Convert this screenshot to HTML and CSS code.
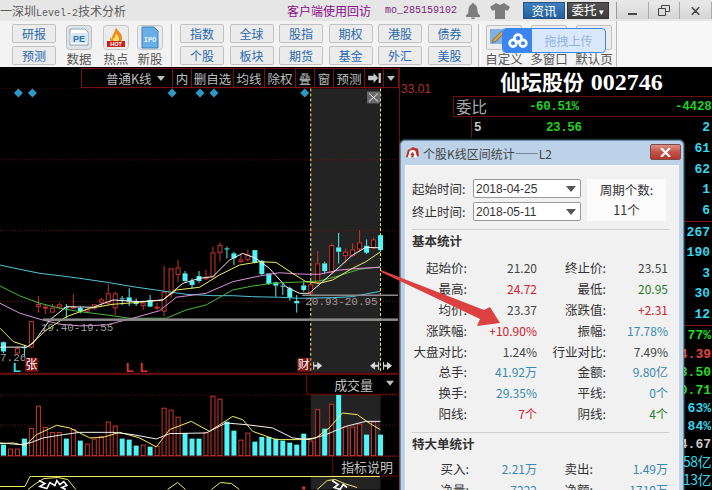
FILE: index.html
```html
<!DOCTYPE html>
<html lang="zh">
<head>
<meta charset="utf-8">
<title>深圳Level-2技术分析</title>
<link rel="stylesheet" href="styles.css">
</head>
<body>
<div class="app">
  <header class="titlebar">
    <span class="app-title"><span class="dash">一</span>深圳<span class="mono">Level-2</span>技术分析</span>
    <span class="visit">客户端使用回访</span>
    <span class="user">mo_285159102</span>
    <svg class="bell" viewBox="0 0 14 16"><path d="M7 0c1 0 1.500.8 1.500 1.500C11 2.500 11.500 5 11.500 8c0 2 1 3 2.500 4.500V14H0v-1.500C1.500 11 2.500 10 2.500 8c0-3 .5-5.500 3-6.500C5.500.8 6 0 7 0zM5 14.500h4C9 15.500 8 16 7 16s-2-.5-2-1.500z"/></svg>
    <svg class="shirt" viewBox="0 0 20 16"><path d="M6 0l4 2 4-2 6 4-2.500 4-2.500-1.500V16H5V6.500L2.500 8 0 4z"/></svg>
    <button class="tb-news">资讯</button>
    <button class="tb-order">委托 <span class="caret">▾</span></button>
    <div class="winbtns">
      <span class="winbtn"><i class="win-min"></i></span>
      <span class="winbtn"><svg viewBox="0 0 12 11" class="win-rest"><path d="M3.500 3V.5h8v6H8M.5 3.500h7v7h-7z"/></svg></span>
      <span class="winbtn"><svg viewBox="0 0 12 10" class="win-x"><path d="M1 0l5 5 5-5M1 10l5-5 5 5"/></svg></span>
    </div>
  </header>

  <nav class="toolbar">
    <div class="btncol first">
      <button class="tbtn">研报</button>
      <button class="tbtn">预测</button>
    </div>
    <div class="iconset">
      <div class="iconitem wide">
        <svg class="ticon" viewBox="0 0 26 25"><rect x=".5" y=".5" width="25" height="24" rx="3" fill="#dfe3e6" stroke="#bdbdbd"/><path d="M4 4h15l3 3v13H4z" fill="#fff" stroke="#8aa4bd"/><rect x="4" y="8" width="18" height="10" fill="#d8e6f2"/><text x="13" y="16.500" class="pe-text">PE</text></svg>
        <span>数据</span>
      </div>
      <div class="iconitem">
        <svg class="ticon" viewBox="0 0 26 25"><rect x=".5" y=".5" width="25" height="24" rx="3" fill="#ececec" stroke="#c4c4c4"/><path d="M13 2c1 4 6 5 6 11 0 1.500-.5 2.500-1 3H8c-.8-1-1.500-2-1-4 .5 1 1 1.500 2 2-.5-4 3-6 4-12z" fill="#f08a1d"/><path d="M13 8c.5 2 3 3 3 6 0 1-.3 1.500-.7 2h-4.600c-.7-1-.9-2 0-3.500.4.700.7 1 1 1.200C11.500 12 13 10 13 8z" fill="#fde06a"/><rect x="4" y="16" width="18" height="6" fill="#c9201a"/><text x="13" y="21" class="hot-text">HOT</text></svg>
        <span>热点</span>
      </div>
      <div class="iconitem">
        <svg class="ticon" viewBox="0 0 26 25"><rect x=".5" y=".5" width="25" height="24" rx="3" fill="#ececec" stroke="#c4c4c4"/><path d="M5 2h12l4 4v17H5z" fill="#6aaee8" stroke="#3d80c0"/><text x="13" y="17" class="ipo-text">IPO</text></svg>
        <span>新股</span>
      </div>
    </div>
    <i class="tsep"></i>
    <div class="btngrid">
      <button class="tbtn">指数</button><button class="tbtn">全球</button><button class="tbtn">股指</button><button class="tbtn">期权</button><button class="tbtn">港股</button><button class="tbtn">债券</button>
      <button class="tbtn">个股</button><button class="tbtn">板块</button><button class="tbtn">期货</button><button class="tbtn">基金</button><button class="tbtn">外汇</button><button class="tbtn">美股</button>
    </div>
    <i class="tsep right"></i>
    <div class="customset">
      <div class="customitem"><span class="cbox"><svg viewBox="0 0 14 14" class="edit"><rect x="0" y="0" width="13" height="13" fill="#7fb0e0"/><path d="M2 12l1-3 7-7 2 2-7 7z" fill="#e8a23a" stroke="#555" stroke-width=".6"/></svg></span><span>自定义</span></div>
      <div class="customitem"><span class="cbox"></span><span>多窗口</span></div>
      <div class="customitem"><span class="cbox"></span><span>默认页</span></div>
    </div>
  </nav>

  <main class="workspace">
    <section class="chart">
      <div class="tabs">
        <span class="tab t-main">普通K线<i class="tri"></i></span>
        <span class="tab t-1">内</span>
        <span class="tab t-3">删自选</span>
        <span class="tab t-2">均线</span>
        <span class="tab t-2">除权</span>
        <span class="tab t-1">叠</span>
        <span class="tab t-1">窗</span>
        <span class="tab t-2">预测</span>
        <span class="tab t-1"><svg class="push" viewBox="0 0 14 11"><path d="M0 3h6V0l5 5.500L6 11V8H0zM11.500 0H14v11h-2.500z"/></svg></span>
        <span class="tab t-end"><i class="tri"></i></span>
      </div>
      <svg id="kchart" class="canvas" viewBox="0 88 400 402"></svg>
    </section>

    <aside class="quote">
      <div class="axis-price">33.01</div>
      <div class="panel">
        <h1 class="stock">仙坛股份 <span class="code">002746</span></h1>
        <div class="ratio"><span class="r-label">委比</span><b class="r-a">-60.51%</b><b class="r-b">-4428</b></div>
        <div class="level"><b class="lv">5</b><b class="lvp">23.56</b><b class="v">2</b></div>
        <div class="vrow"><b class="v">61</b></div>
        <div class="vrow"><b class="v">62</b></div>
        <div class="vrow"><b class="v">1</b></div>
        <div class="vrow"><b class="v">6</b></div>
        <div class="vrow ruled"><b class="v">267</b></div>
        <div class="vrow"><b class="v">190</b></div>
        <div class="vrow"><b class="v">3</b></div>
        <div class="vrow"><b class="v">30</b></div>
        <div class="vrow"><b class="v">12</b></div>
        <div class="srow ruled first"><b class="s green">77%</b></div>
        <div class="srow"><b class="s red">4.39</b></div>
        <div class="srow"><b class="s green">3.50</b></div>
        <div class="srow"><b class="s green">0.71</b></div>
        <div class="srow"><b class="s cyan">63%</b></div>
        <div class="srow"><b class="s cyan">84%</b></div>
        <div class="srow"><b class="s gray">4.67</b></div>
        <div class="srow"><span class="s cyan">58亿</span></div>
        <div class="srow"><span class="s cyan">13亿</span></div>
      </div>
    </aside>
  </main>

  <div class="popup">
    <span class="pop-logo"><svg viewBox="0 0 22 16"><g fill="none" stroke="#fff" stroke-width="3"><circle cx="11" cy="5.500" r="4"/><circle cx="5.500" cy="11" r="3.700"/><circle cx="16.500" cy="11" r="3.700"/></g></svg></span>
    <span class="pop-text">拖拽上传</span>
  </div>

  <div class="dialog">
    <div class="dlg-title">
      <svg class="dlg-icon" viewBox="0 0 16 14"><path d="M1 11L3 3l3-1 2-2 3 1 3 1 1 8z" fill="#b8322a"/><path d="M3 11L5 4l3-1 3 1 2 7z" fill="#fff"/><path d="M8 5l2.500 4H9l.5 2h-3L7 9H5.500z" fill="#b8322a"/></svg>
      <span class="dlg-name">个股K线区间统计——L2</span>
      <span class="dlg-close"><svg viewBox="0 0 11 9"><path d="M1 0l4.500 4.500L10 0M1 9l4.500-4.500L10 9" fill="none" stroke="#fff" stroke-width="2.200"/></svg></span>
    </div>
    <div class="dlg-body">
      <div class="period">
        <div class="dates">
          <label class="dline"><span>起始时间:</span><span class="sel">2018-04-25<i class="sel-tri"></i></span></label>
          <label class="dline"><span>终止时间:</span><span class="sel">2018-05-11<i class="sel-tri"></i></span></label>
        </div>
        <div class="count"><span>周期个数:</span><span>11个</span></div>
      </div>
      <hr class="rule">
      <h2 class="sect">基本统计</h2>
      <div class="stats">
        <span class="k">起始价:</span><span class="n">21.20</span><span class="k">终止价:</span><span class="n">23.51</span>
        <span class="k">最高:</span><span class="n up">24.72</span><span class="k">最低:</span><span class="n down">20.95</span>
        <span class="k">均价:</span><span class="n">23.37</span><span class="k">涨跌值:</span><span class="n up">+2.31</span>
        <span class="k">涨跌幅:</span><span class="n up">+10.90%</span><span class="k">振幅:</span><span class="n blue">17.78%</span>
        <span class="k">大盘对比:</span><span class="n">1.24%</span><span class="k">行业对比:</span><span class="n">7.49%</span>
        <span class="k">总手:</span><span class="n blue">41.92万</span><span class="k">金额:</span><span class="n blue">9.80亿</span>
        <span class="k">换手:</span><span class="n blue">29.35%</span><span class="k">平线:</span><span class="n blue">0个</span>
        <span class="k">阳线:</span><span class="n up">7个</span><span class="k">阴线:</span><span class="n down">4个</span>
      </div>
      <hr class="rule second">
      <h2 class="sect">特大单统计</h2>
      <div class="stats big">
        <span class="k">买入:</span><span class="n blue">2.21万</span><span class="k">卖出:</span><span class="n blue">1.49万</span>
        <span class="k">净量:</span><span class="n blue">7222</span><span class="k">净额:</span><span class="n blue">1710万</span>
      </div>
    </div>
  </div>

  <svg class="arrow" viewBox="381 262 130 70"><path d="M381 270L484 310 490 307 500 323 477 326 480 319 381 272z" fill="#dc4040"/></svg>
</div>
<script src="chart.js"></script>
</body>
</html>
```

FILE: styles.css
```css
* { box-sizing: border-box; }
html, body { margin: 0; padding: 0; background: #000; }
body { font-family: "Liberation Sans", "Noto Sans CJK SC", sans-serif; }
.app { position: relative; width: 712px; height: 490px; overflow: hidden; display: flex; flex-direction: column; background: #000; }
button { font: inherit; padding: 0; }

/* title bar */
.titlebar { height: 21px; flex: none; display: flex; align-items: center; background: #e6e6e6; color: #555; font-size: 12px; white-space: nowrap; }
.app-title { width: 287px; font-family: "Noto Sans CJK SC", sans-serif; color: #5a5a5a; }
.dash { display: inline-block; width: 12px; overflow: hidden; vertical-align: bottom; }
.mono { font-family: "Liberation Mono", monospace; font-size: 10px; }
.visit { width: 98px; color: #8a0a8a; font-family: "Noto Sans CJK SC", sans-serif; }
.user { width: 81px; color: #7a1c7a; font-family: "Liberation Mono", monospace; font-size: 10px; }
.bell { width: 14px; height: 16px; fill: #7c7c7c; margin-right: 10px; }
.shirt { width: 20px; height: 16px; fill: #7c7c7c; margin-right: 13px; }
.tb-news { width: 42px; height: 17px; border: 1px solid #27527f; background: linear-gradient(#3f7fbd, #24609c); color: #fff; font-size: 12.500px; line-height: 14px; margin-right: 2px; font-family: "Noto Sans CJK SC", sans-serif; }
.tb-order { width: 42px; height: 17px; border: 1px solid #333; background: linear-gradient(#555, #3a3a3a); color: #fff; font-size: 12.500px; line-height: 14px; font-family: "Noto Sans CJK SC", sans-serif; white-space: nowrap; }
.caret { font-size: 9px; }
.winbtns { margin-left: 7px; display: flex; width: 96px; height: 17px; border-left: 1px solid #999; }
.winbtn { flex: 1; display: flex; align-items: center; justify-content: center; background: linear-gradient(#e8e8e8, #d4d4d4); border-right: 1px solid #aaa; }
.win-min { display: block; width: 9px; height: 2px; background: #444; margin-top: 6px; }
.win-rest { width: 12px; height: 11px; fill: none; stroke: #444; }
.win-x { width: 9px; height: 8px; fill: none; stroke: #444; stroke-width: 2; }

/* toolbar */
.toolbar { height: 46px; flex: none; width: 617px; display: flex; background: #f3f3f3; padding: 3px 0 0 12px; border-right: 1px solid #bbb; position: relative; }
.toolbar::after { content: ""; position: absolute; left: 617px; top: 0; width: 95px; height: 46px; background: #f7f7f7; }
.btncol { display: flex; flex-direction: column; gap: 3px; width: 44px; }
.tbtn { width: 44px; height: 19px; background: #ececec; border: 1px solid #c2c2c2; border-radius: 2px; color: #2a69ad; font-size: 12px; line-height: 15px; font-family: "Noto Sans CJK SC", sans-serif; }
.iconset { display: flex; margin-left: 10px; gap: 8px; width: 104px; }
.iconitem { width: 26px; display: flex; flex-direction: column; align-items: center; color: #555; font-size: 12.500px; line-height: 14px; white-space: nowrap; font-family: "Noto Sans CJK SC", sans-serif; }
.iconitem.wide { margin-right: 3px; }
.ticon { width: 26px; height: 25px; flex: none; margin: 1px 0 2px; }
.pe-text { font: bold 9px "Liberation Sans", sans-serif; fill: #2f6fa8; text-anchor: middle; }
.hot-text { font: bold 5.500px "Liberation Sans", sans-serif; fill: #fff; text-anchor: middle; }
.ipo-text { font: bold 7px "Liberation Mono", monospace; fill: #e6f3ff; text-anchor: middle; }
.tsep { width: 3px; height: 43px; margin-left: 1px; border-left: 1px solid #bbb; border-right: 1px solid #fff; }
.btngrid { margin-left: 6px; display: grid; grid-template-columns: repeat(6, 44px); gap: 3px 5.500px; width: 295px; height: 41px; }
.tsep.right { margin-left: 3px; }
.customset { display: flex; margin-left: 5px; gap: 9px; }
.customitem { display: flex; flex-direction: column; align-items: center; width: 36px; color: #555; font-size: 12.500px; line-height: 14px; white-space: nowrap; font-family: "Noto Sans CJK SC", sans-serif; }
.cbox { display: block; width: 36px; height: 25px; margin: 1px 0 2px; background: #ececec; border: 1px solid #c2c2c2; border-radius: 2px; padding: 3px; }
.edit { display: block; width: 16px; height: 16px; }

/* popup */
.popup { position: absolute; left: 502px; top: 28px; width: 104px; height: 25px; display: flex; border-radius: 4px; overflow: hidden; border: 1px solid #3d86ea; background: #dbe8fb; }
.pop-logo { width: 29px; background: #3a86ee; display: flex; align-items: center; justify-content: center; }
.pop-logo svg { width: 20px; height: 15px; }
.pop-text { flex: 1; text-align: center; color: #93b4e6; font-size: 12px; line-height: 23px; font-family: "Noto Sans CJK SC", sans-serif; }

/* workspace */
.workspace { flex: 1; display: flex; min-height: 0; background: #000; padding-top: 1px; }
.chart { width: 400px; flex: none; display: flex; flex-direction: column; border-right: 1px solid #6d0d0d; }
.tabs { height: 20px; flex: none; display: flex; justify-content: flex-start; padding-left: 81px; }
.tab { flex: none; display: flex; align-items: center; justify-content: center; border: 1px solid #7a1010; border-left-width: 0; color: #bdbdbd; font-size: 12.500px; white-space: nowrap; height: 20px; font-family: "Noto Sans CJK SC", sans-serif; }
.t-main { width: 92px; border-left-width: 1px; padding-left: 24px; justify-content: flex-start; position: relative; }
.t-main .tri { position: absolute; right: 7px; top: 7px; }
.t-1 { width: 19px; }
.t-2 { width: 31px; }
.t-3 { width: 42px; }
.t-end { width: 15px; }
.tri { display: block; width: 0; height: 0; border: 4px solid transparent; border-top: 5px solid #bdbdbd; border-bottom: 0; }
.push { width: 13px; height: 10px; fill: #c8c8c8; }
.canvas { display: block; width: 399px; height: 402px; flex: none; }
.cv-text { font: 11px "Liberation Mono", monospace; fill: #9c9c9c; }
.cv-cjk { font: 13px "Noto Sans CJK SC", sans-serif; fill: #c0c0c0; }
.cv-badge { font: 12px "Noto Sans CJK SC", sans-serif; fill: #fff; }
.cv-l { font: bold 13px "Liberation Sans", sans-serif; }

/* right quote panel */
.quote { flex: 1; position: relative; min-width: 0; }
.axis-price { position: absolute; left: 1px; top: 14px; color: #b03030; font-size: 12px; }
.panel { margin-left: 53px; display: flex; flex-direction: column; }
.stock { margin: 0 0 0 -6px; height: 28px; font: bold 21px/27px "Noto Sans CJK SC", sans-serif; color: #fff; width: 265px; padding-left: 53px; white-space: nowrap; }
.code { font: bold 24px "Liberation Serif", serif; margin-left: 2px; }
.ratio { height: 21px; display: flex; align-items: center; border: 1px solid #6d0d0d; border-right: 0; position: relative; color: #22d022; }
.r-label { color: #a8a8a8; font-size: 15.500px; width: 75px; padding-left: 2px; line-height: 19px; font-family: "Noto Sans CJK SC", sans-serif; }
.r-a { font: bold 12.500px "Liberation Mono", monospace; letter-spacing: -.4px; width: 146px; }
.r-b { font: bold 12.500px "Liberation Mono", monospace; letter-spacing: -.2px; }
.level { height: 21px; display: flex; align-items: center; position: relative; }
.level::before { content: ""; position: absolute; left: 18px; top: 0; width: 1px; height: 21px; background: #6d0d0d; }
.lv { font: bold 12.500px "Liberation Mono", monospace; color: #c8c8c8; margin-left: 21px; width: 72px; }
.lvp { font: bold 12.500px "Liberation Mono", monospace; color: #22d022; letter-spacing: -.4px; }
.v { font: bold 13px "Liberation Mono", monospace; color: #38d6ea; margin-left: auto; margin-right: 2px; }
.vrow { height: 20.800px; display: flex; align-items: center; }
.srow { height: 18px; display: flex; align-items: center; }
.srow.first { height: 20px; }
.ruled { border-top: 1px solid #7a1010; }
.s { font: bold 13px "Liberation Mono", monospace; margin-left: auto; margin-right: 1px; white-space: nowrap; }
span.s { font: 14px/14px "Noto Sans CJK SC", sans-serif; letter-spacing: -.5px; margin-bottom: 3px; }
.green { color: #22dd22; }
.red { color: #e24040; }
.cyan { color: #38d6ea; }
.gray { color: #c8c8c8; }

/* dialog */
.dialog { position: absolute; left: 400px; top: 140px; width: 284px; height: 362px; background: #bcd2e8; border: 1px solid #6f8ba6; border-radius: 5px 5px 0 0; padding: 0 4px 4px; display: flex; flex-direction: column; box-shadow: 0 0 2px #8cc; }
.dlg-title { height: 24px; flex: none; display: flex; align-items: center; position: relative; color: #444; font-size: 12px; font-family: "Noto Sans CJK SC", sans-serif; }
.dlg-icon { width: 15px; height: 13px; }
.dlg-name { margin-left: 3px; }
.dlg-close { position: absolute; right: -2px; top: 3px; width: 31px; height: 16px; border: 1px solid #7d4a46; border-radius: 2px; background: linear-gradient(#df9188, #c25248 50%, #b0392f); display: flex; align-items: center; justify-content: center; }
.dlg-close svg { width: 11px; height: 9px; }
.dlg-body { flex: 1; background: #f1f1f1; padding: 13px 6px 0; color: #333; font-size: 12.500px; font-family: "Noto Sans CJK SC", sans-serif; border: 1px solid #fafafa; margin-top: 0; }
.period { display: flex; gap: 6px; }
.dates { display: flex; flex-direction: column; gap: 4px; width: 169px; }
.dline { display: flex; justify-content: space-between; align-items: center; height: 19px; white-space: nowrap; }
.sel { width: 108px; height: 19px; border: 1px solid #9a9a9a; border-radius: 2px; background: #fff; position: relative; font: 12px/18px "Liberation Sans", sans-serif; padding-left: 2px; color: #333; }
.sel-tri { position: absolute; right: 4px; top: 6px; width: 0; height: 0; border: 5px solid transparent; border-top: 6px solid #555; border-bottom: 0; }
.count { width: 79px; height: 42px; background: #fbfbfb; display: flex; flex-direction: column; align-items: center; gap: 1px; line-height: 19px; padding-top: 1px; }
.rule { margin: 8px 0 0; width: 257px; border: 0; border-top: 1px solid #cfcfcf; }
.rule.second { margin-top: 8px; }
.sect { margin: 2px 0 0; height: 18px; font: bold 12.500px/18px "Noto Sans CJK SC", sans-serif; color: #333; }
.stats { display: grid; grid-template-columns: 55px 70px 69px 62px; grid-auto-rows: 20.900px; margin-top: 7px; align-items: center; }
.stats.big { grid-template-columns: 57px 68px 56px 75px; margin-top: 5px; }
.k { text-align: right; white-space: nowrap; color: #333; }
.n { text-align: right; white-space: nowrap; color: #444; font-size: 12px; }
.n.up { color: #d0202a; }
.n.down { color: #2a7a2a; }
.n.blue { color: #3a8ab0; }

/* annotation arrow */
.arrow { position: absolute; left: 381px; top: 262px; width: 130px; height: 70px; }
```

FILE: chart.js
```js
(function () {
  var svg = document.getElementById('kchart');
  var NS = 'http://www.w3.org/2000/svg';
  function el(name, attrs, text) {
    var e = document.createElementNS(NS, name);
    for (var k in attrs) e.setAttribute(k, attrs[k]);
    if (text) e.textContent = text;
    svg.appendChild(e);
    return e;
  }
  var RED = '#c8362e', CYAN = '#50f4f6', YEL = '#f2ee62', WHITE = '#f4f4f4';

  // selection band
  el('rect', { x: 311.5, y: 88, width: 70, height: 285, fill: '#232323' });
  el('rect', { x: 311.5, y: 395, width: 70, height: 61, fill: '#232323' });
  el('rect', { x: 311.5, y: 477, width: 70, height: 13, fill: '#232323' });

  // grid
  [87.5, 159.5, 230.5, 301.5, 395.5, 425.5].forEach(function (y) {
    el('line', { x1: 0, x2: 399, y1: y, y2: y, stroke: '#7c0f0f', 'stroke-dasharray': '1 2' });
  });
  el('rect', { x: 0, y: 373, width: 399, height: 2, fill: '#6d0d0d' });
  el('rect', { x: 0, y: 456, width: 399, height: 1, fill: '#8a1010' });
  [311.5, 381.5].forEach(function (x) {
    el('line', { x1: x, x2: x, y1: 88, y2: 373, stroke: '#f4ee60', 'stroke-dasharray': '3 2' });
  });

  // diamonds
  [18.5, 32.5, 172.5, 200.5, 214.5, 305.5].forEach(function (x) {
    el('path', { d: 'M' + x + ' 88l4.500 4.500-4.500 4.500-4.500-4.500z', fill: '#2f97c4' });
  });

  // close tag
  el('rect', { x: 368, y: 91, width: 13, height: 12, fill: '#6a6a6a' });
  el('path', { d: 'M370 93l9 8M379 93l-9 8', stroke: '#eee', fill: 'none' });

  // candles: colour, wick top, body top, body bottom, wick bottom (3x, offset y 630)
  var candles = [
    ['c',395,397,425,430],null,['r',410,415,428,430],['c',405,412,415,440],['r',333,333,410,415],
    ['r',258,282,288,308],['r',282,290,293,312],['r',282,293,305,305],['r',278,283,290,298],['c',282,292,294,325],
    ['r',252,290,293,295],['c',290,294,303,310],['r',295,297,302,308],['r',282,283,293,300],['r',263,268,275,290],
    ['r',222,250,278,285],['r',245,250,292,315],['c',258,265,268,285],['c',235,262,275,288],['c',265,273,282,288],
    ['r',272,278,285,300],['c',255,270,290,292],['r',278,290,292,300],['r',168,245,302,320],['r',175,175,250,265],
    ['r',150,172,192,215],['c',183,190,213,215],['c',205,213,225,235],['c',183,198,213,218],['r',180,200,205,210],
    ['r',110,127,197,205],['r',97,105,125,155],['c',110,115,117,145],['c',125,130,145,165],['r',130,148,153,158],
    ['r',118,133,147,155],['c',120,120,158,160],['c',150,152,192,195],['c',190,190,222,225],['c',215,217,227,260],
    ['c',222,227,229,255],['c',230,235,262,272],['c',255,273,280,308],['c',215,226,240,245],['r',220,223,248,250],
    ['r',123,160,215,222],['c',155,160,183,190],['r',100,105,185,190],['c',68,112,125,160],['r',115,125,135,160],
    ['r',100,118,135,140],['r',60,97,115,125],['c',88,107,128,132],['r',82,88,112,118],['c',75,75,120,125]
  ];
  var ky = function (v) { return 210 + v / 3; };
  candles.forEach(function (c, i) {
    if (!c) return;
    var x = 3.5 + 7 * i, col = c[0] === 'r' ? RED : CYAN;
    el('line', { x1: x, x2: x, y1: ky(c[1]), y2: ky(c[2]), stroke: col });
    el('line', { x1: x, x2: x, y1: ky(c[3]), y2: ky(c[4]), stroke: col });
    el('rect', {
      x: x - 2.5, y: ky(c[2]) + (c[0] === 'r' ? .5 : 0), width: c[0] === 'r' ? 4 : 5,
      height: Math.max(1, (c[3] - c[2]) / 3),
      fill: c[0] === 'r' ? '#000' : CYAN, stroke: c[0] === 'r' ? RED : 'none',
      transform: c[0] === 'r' ? 'translate(.5 0)' : ''
    });
  });

  function line(pts, col, oy) {
    var s = [];
    for (var i = 0; i < pts.length; i += 2) s.push((pts[i] / 3).toFixed(1) + ',' + (oy + pts[i + 1] / 3).toFixed(1));
    el('polyline', { points: s.join(' '), fill: 'none', stroke: col, 'stroke-linejoin': 'round' });
  }
  line([0,165,60,178,120,190,180,197,240,205,330,218,400,230,490,243,560,253,640,257,700,257,760,260,840,262,900,265,1000,263,1060,260,1100,252,1144,244], '#52c4d8', 210);
  line([0,228,60,258,120,280,180,295,240,305,320,315,390,325,500,325,560,300,620,285,700,240,760,228,820,220,900,216,960,213,1010,200,1080,178,1144,170], '#4cb83c', 210);
  line([0,280,60,310,120,328,180,343,240,348,320,345,400,325,480,302,530,262,620,250,700,215,780,198,840,188,900,192,960,193,1020,180,1080,175,1144,172], '#e090e0', 210);
  line([0,355,40,395,85,410,140,360,200,320,270,295,340,283,420,277,490,270,530,240,600,232,660,195,720,165,780,155,830,157,880,190,920,215,960,220,1000,210,1060,175,1100,155,1144,125], YEL, 210);
  line([0,412,80,412,100,400,150,330,200,290,280,292,340,270,420,275,490,270,550,220,600,205,640,200,690,150,730,130,770,145,810,175,860,230,900,250,930,250,970,215,1010,180,1060,135,1100,112,1144,113], WHITE, 210);

  // range markers
  el('rect', { x: 43, y: 318.5, width: 356, height: 2.5, fill: '#8c8c8c' });
  el('rect', { x: 303, y: 294.5, width: 96, height: 1.5, fill: '#8c8c8c' });
  el('text', { x: 41, y: 331, class: 'cv-text' }, '19.40-19.55');
  el('text', { x: 306, y: 305, class: 'cv-text' }, '20.93-20.95');
  el('text', { x: 0, y: 361, class: 'cv-text' }, '7.26');

  // event badges
  el('text', { x: 13, y: 372, class: 'cv-l', fill: '#38d6ea' }, 'L');
  el('rect', { x: 25, y: 358, width: 13, height: 14, fill: '#7a1010' });
  el('text', { x: 25.5, y: 369, class: 'cv-badge' }, '张');
  el('text', { x: 126, y: 372, class: 'cv-l', fill: '#d03a30' }, 'L');
  el('text', { x: 140, y: 372, class: 'cv-l', fill: '#d03a30' }, 'L');
  el('rect', { x: 298, y: 358, width: 13, height: 14, fill: '#7a1010' });
  el('text', { x: 298.5, y: 369, class: 'cv-badge' }, '财');
  ['M315 365h3v-3l5 4-5 4v-3h-3zM314 362h1v8h-1z', 'M379 365h-3v-3l-5 4 5 4v-3h3zM380 362h-1v8h1z', 'M385 365h3v-3l5 4-5 4v-3h-3zM384 362h1v8h-1z'].forEach(function (d) {
    el('path', { d: d, fill: '#d8d8d8' });
  });

  // volume
  var tops = [255,267,267,237,205,138,202,217,217,237,208,243,252,237,229,186,198,237,240,258,255,261,258,144,150,171,220,237,237,217,108,117,186,213,240,219,246,232,232,237,243,249,255,222,243,148,207,132,105,201,201,192,225,186,225];
  var cyanBars = { 0:1,3:1,9:1,11:1,17:1,18:1,19:1,21:1,26:1,27:1,28:1,32:1,33:1,36:1,37:1,38:1,39:1,40:1,41:1,42:1,43:1,46:1,48:1,52:1,54:1 };
  tops.forEach(function (t, i) {
    var x = 1 + 7 * i, y = 360 + t / 3, h = 456 - y;
    if (cyanBars[i]) el('rect', { x: x, y: y, width: 5, height: h, fill: CYAN });
    else el('rect', { x: x + .5, y: y + .5, width: 4, height: h - .5, fill: '#000', stroke: RED });
  });
  line([0,252,40,250,75,258,110,225,170,197,210,205,270,235,310,233,360,218,420,235,470,262,510,210,575,185,630,215,700,170,730,180,760,215,830,240,900,240,950,235,990,205,1030,160,1075,165,1110,190,1144,210], YEL, 360);
  line([0,250,60,255,90,250,130,235,190,225,240,218,340,218,400,225,470,238,510,222,620,220,680,190,740,195,820,205,880,235,930,240,980,225,1040,200,1100,185,1144,185], WHITE, 360);

  // volume + indicator captions
  el('path', { d: 'M307.5 375v19.500H399', fill: 'none', stroke: '#6d0d0d' });
  el('text', { x: 335, y: 390, class: 'cv-cjk' }, '成交量');
  el('path', { d: 'M387 381h8l-4 5z', fill: '#c0c0c0' });
  el('path', { d: 'M333.500 457v19.500H399', fill: 'none', stroke: '#6d0d0d' });
  el('text', { x: 342, y: 472, class: 'cv-cjk' }, '指标说明');

  // lower indicator
  line([0,9,75,9,90,-21,95,-21,1142,-21], YEL, 484);
  el('polyline', { points: '28,490 36,484 44,479 58,478 68,480 76,490', fill: 'none', stroke: YEL });
  el('polyline', { points: '168,490 178,483 186,490', fill: 'none', stroke: YEL });
  el('polyline', { points: '212,490 221,483 232,484 240,490', fill: 'none', stroke: YEL });
  el('polyline', { points: '318,490 328,481 336,480 345,484 358,488', fill: 'none', stroke: YEL });
  el('path', { d: 'M39 481l6 3-5 3 7 2 3-6 5 3 2-5 3 4 4-3 3 4-5 2 4 2M333 481l6 4-4 3 6 2 3-5 4 3', fill: 'none', stroke: '#fff', 'stroke-width': 1.6 });
  el('rect', { x: 303, y: 487, width: 3, height: 3, fill: '#d03a30' });
})();
```
